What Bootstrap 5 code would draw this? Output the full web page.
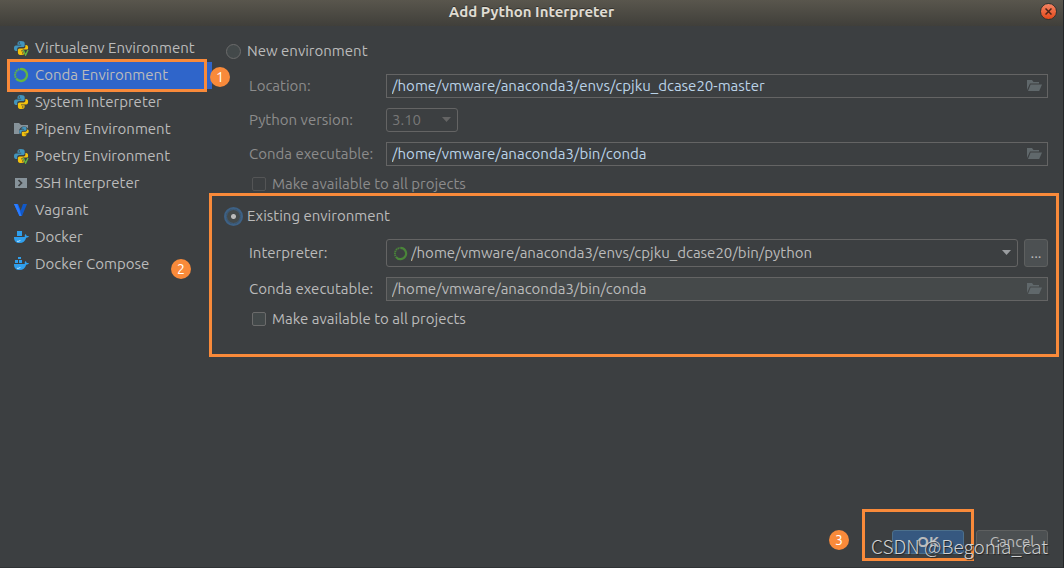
<!DOCTYPE html>
<html lang="en">
<head>
<meta charset="utf-8">
<meta name="viewport" content="width=device-width, initial-scale=1">
<title>Add Python Interpreter</title>
<link href="https://cdn.jsdelivr.net/npm/bootstrap@5.3.0/dist/css/bootstrap.min.css" rel="stylesheet">
<style>
body{background:#3c3f41;color:#bbb;font:15px/20px Ubuntu,"Noto Sans",sans-serif}
.dialog{border-right:1px solid #242628;border-bottom:1px solid #303335}
.titlebar{height:26px;background:linear-gradient(#59564d,#403f3a);color:#dfdbd2;font-weight:700;line-height:24px;text-shadow:0 -1px #33322e}
.close-btn{width:17px;height:17px;right:6px;top:3px;border:1px solid #34332e;border-radius:50%;background:linear-gradient(#f58463,#e4491a);color:#4a2418}
.sidebar{width:212px;padding:9px 0 0 8px}
.kinds a{height:27px;padding-left:5px;gap:6px;line-height:18px;padding-bottom:1px;color:#bbb;text-decoration:none;white-space:nowrap}
.kinds a.active{background:#2f65ca}
.kinds svg{width:16px;height:16px;flex:none}
.options{padding:15px 15px 0 14px}
.option-title{height:20px;gap:6px}
.option-body{padding:13px 0 0 23px}
.field-row{display:grid;grid-template-columns:137px minmax(0,1fr);align-items:center;margin-bottom:10px}
.soft{color:#8c8c8c}
.box{height:24px;border:1px solid #646464;background:#3c3f41}
.box input{border:0;background:transparent;outline:0;padding:0 5px;color:#bbb;min-width:0}
.box.editable input{color:#bbd3e8}
.box.locked{background:#45494a}
.browse{width:27px;border:0;padding:0;background:transparent;color:#60686b}
.browse svg{display:block;margin:auto}
.combo{height:28px;border:1px solid #646464;border-radius:3px;position:relative}
.combo select{appearance:none;display:block;border:0;background:transparent;width:100%;height:100%;color:#bbb;outline:0;padding:0 24px 0 24px}
.combo .ring{position:absolute;left:6px;top:6px}
.combo .arrow{position:absolute;right:5px;top:50%;margin-top:-3px}
.combo.small-combo{width:72px;height:24px}
.small-combo select{padding:0 5px;color:#777;opacity:1}
.interp-row{gap:6px}
.more{width:24px;height:28px;border:1px solid #5e6060;border-radius:3px;background:#4c5052;color:#bbb;padding:0}
.radio{appearance:none;width:15px;height:15px;border:1px solid #6b6b6b;border-radius:50%;background:#43494a;margin:0}
.radio:checked{background:radial-gradient(circle,#bbb 0 2px,#43494a 3px);border-color:#3d6185;outline:2px solid #3d6185}
.tick{appearance:none;width:14px;height:14px;border:1px solid #6b6b6b;border-radius:2px;background:#43494a;margin:0}
.tick:disabled{background:#3c3f41;border-color:#545556}
.tick-row{height:20px;margin-top:-2px;gap:6px;padding-left:3px}
.existing{margin-top:12px}
.footer{padding:0 15px 13px;gap:12px}
.footer button{width:72px;height:24px;padding:0;line-height:22px;border:1px solid #5e6060;border-radius:3px;background:#4c5052;color:#bbb}
.footer .ok{background:#365880;border-color:#4c708c;font-weight:700}
.frame{position:absolute;border:3px solid #f98a3a;pointer-events:none;z-index:2}
.step{position:absolute;width:20px;height:20px;border-radius:50%;background:#f98a3a;color:#fff;font-size:14px;line-height:20px;text-align:center;z-index:3}
.frame-kind{left:-1px;right:5px;top:-3px;bottom:-3px}
.frame-existing{left:-17px;right:-11px;top:-13px;bottom:-28px}
.frame-ok{left:-30px;right:-10px;top:-21px;bottom:-7px}
.step-1{right:-18px;top:5px}
.step-2{right:21px;bottom:-1px}
.step-3{left:-63px;top:0}
.watermark{position:absolute;right:15px;bottom:9px;z-index:4;font:300 19px/24px "Noto Sans CJK SC",sans-serif;color:#d0d1d2;text-shadow:1px 1px 1px #222;white-space:nowrap;pointer-events:none}
</style>
</head>
<body>
<svg class="d-none" aria-hidden="true">
<defs>
<g id="python"><path fill="#4295bd" d="M7.8 1C5.4 1 4.5 2 4.5 3.3v1.5h3.7v.7H3C1.5 5.500 1 6.700 1 8.300S1.700 11 3 11h1.200V9.200c0-1.300 1-2.200 2.300-2.200H10c1 0 1.700-.8 1.700-1.800V3.300C11.700 1.700 10.300 1 7.800 1z"/><circle cx="6.300" cy="3" r=".7" fill="#3c3f41"/><path fill="#f4c20d" d="M8.300 15c2.400 0 3.300-1 3.300-2.300v-1.500H8v-.7h5.100c1.500 0 2-1.200 2-2.800S14.400 5 13.100 5h-.7v1.400c0 1.300-1 2.100-2.300 2.100H6.600c-1 0-1.700.8-1.700 1.800v2.400c0 1.600 1.200 2.300 3.400 2.300z"/><circle cx="9.800" cy="13" r=".7" fill="#3c3f41"/></g>
<g id="python-v"><use href="#python"/><path d="M9.500 9.500H16V16h-4z" fill="#3c3f41"/><path d="m10.300 10 2.300 5L15 10" fill="none" stroke="#62b543" stroke-width="1.400"/></g>
<g id="ring-shape" fill="none" stroke="currentColor"><path d="M8 2a6 6 0 1 1-4.900 9.500" stroke-width="2.300"/><path d="M2.700 10.700A6 6 0 0 1 8 2" stroke-width="2" stroke-dasharray="1.500 .7"/></g>
<g id="folder-open"><path d="M1 12V2h5l1.500 2H13v1.500H4L1 12z"/><path d="M4.600 6.500H16L13.200 13H2z"/></g>
<g id="whale" fill="#2f9fed"><path d="M1 8h10.800c-.3-1.200 0-2.200.7-3 .8.600 1.100 1.200 1.200 2 .8-.1 1.600 0 2.200.3-.5 1-1.400 1.400-2.700 1.400C12.200 12 10 14 6.500 14 3 14 1 12 1 8z"/><path d="M4 12.300c1.500.3 2.700-.2 3.500-1.300" stroke="#bce2fb" fill="none"/></g>
</defs>
</svg>
<div class="dialog position-relative d-flex flex-column min-vh-100">
<header class="titlebar position-relative text-center">Add Python Interpreter
<button class="close-btn position-absolute p-0 d-flex align-items-center justify-content-center" aria-label="Close"><svg width="7" height="7" viewBox="0 0 7 7"><path d="m.5.5 6 6m0-6-6 6" stroke="currentColor" stroke-width="1.500"/></svg></button>
</header>
<main class="d-flex flex-grow-1">
<nav class="sidebar flex-shrink-0" aria-label="Interpreter type">
<div class="kinds position-relative">
<a href="#" class="d-flex align-items-center"><svg viewBox="0 0 16 16"><use href="#python-v"/></svg>Virtualenv Environment</a>
<a href="#" class="active position-relative d-flex align-items-center"><svg viewBox="0 0 16 16" color="#62b543"><use href="#ring-shape"/></svg>Conda Environment<span class="frame frame-kind"></span><span class="step step-1">1</span></a>
<a href="#" class="d-flex align-items-center"><svg viewBox="0 0 16 16"><use href="#python"/></svg>System Interpreter</a>
<a href="#" class="d-flex align-items-center"><svg viewBox="0 0 16 16"><path fill="#87939a" d="M1 2h5l2 2h7v9H1z"/><circle cx="11" cy="10.500" r="5" fill="#3c3f41"/><use href="#python" transform="translate(5.500 5) scale(.68)"/></svg>Pipenv Environment</a>
<a href="#" class="d-flex align-items-center"><svg viewBox="0 0 16 16"><use href="#python-v"/></svg>Poetry Environment</a>
<a href="#" class="d-flex align-items-center"><svg viewBox="0 0 16 16"><path fill="#87939a" d="M2 3h12v10H2z"/><path d="m5.500 5 3 3-3 3" fill="none" stroke="#3c3f41" stroke-width="1.700"/></svg>SSH Interpreter</a>
<a href="#" class="d-flex align-items-center"><svg viewBox="0 0 16 16"><path fill="#1868f2" d="M1 2h4l3 7.500V14H6.500z"/><path fill="#1158c7" d="M14 2h-4L7.500 9v5H9z"/><path fill="#2b7dff" d="M1 2h3l4.500 12h-2z"/></svg>Vagrant</a>
<a href="#" class="d-flex align-items-center"><svg viewBox="0 0 16 16"><use href="#whale"/><path fill="#2f9fed" d="M4 2h5v5H4z"/></svg>Docker</a>
<a href="#" class="d-flex align-items-center"><svg viewBox="0 0 16 16"><use href="#whale"/><path fill="#2f9fed" d="M5 1h3v2H5zM2 4h3v3H2zM6 4h3v3H6z"/></svg>Docker Compose</a>
<span class="step step-2">2</span>
</div>
</nav>
<form class="options flex-grow-1">
<section>
<div class="option-title d-flex align-items-center"><input class="radio" type="radio" name="env" id="new-env"><label for="new-env">New environment</label></div>
<div class="option-body">
<div class="field-row"><label class="soft" for="loc">Location:</label><div class="box editable d-flex"><input class="flex-grow-1" id="loc" value="/home/vmware/anaconda3/envs/cpjku_dcase20-master"><button type="button" class="browse" aria-label="Browse"><svg width="16" height="16" fill="currentColor"><use href="#folder-open"/></svg></button></div></div>
<div class="field-row"><label class="soft" for="ver">Python version:</label><div class="combo small-combo"><select id="ver" disabled><option>3.10</option></select><svg class="arrow" width="11" height="6"><path d="M1 0h9L5.500 5z" fill="#646464"/></svg></div></div>
<div class="field-row"><label class="soft" for="conda1">Conda executable:</label><div class="box editable d-flex"><input class="flex-grow-1" id="conda1" value="/home/vmware/anaconda3/bin/conda"><button type="button" class="browse" aria-label="Browse"><svg width="16" height="16" fill="currentColor"><use href="#folder-open"/></svg></button></div></div>
<div class="tick-row d-flex align-items-center soft"><input class="tick" type="checkbox" id="all1" disabled><label for="all1">Make available to all projects</label></div>
</div>
</section>
<section class="existing position-relative">
<div class="option-title d-flex align-items-center"><input class="radio" type="radio" name="env" id="old-env" checked><label for="old-env">Existing environment</label></div>
<div class="option-body">
<div class="field-row"><label for="interp">Interpreter:</label><div class="d-flex interp-row"><div class="combo flex-grow-1"><svg class="ring" width="15" height="15" viewBox="0 0 16 16" color="#4a8539"><use href="#ring-shape"/></svg><select id="interp"><option>/home/vmware/anaconda3/envs/cpjku_dcase20/bin/python</option></select><svg class="arrow" width="11" height="6"><path d="M1 0h9L5.500 5z" fill="#9a9da0"/></svg></div><button type="button" class="more">...</button></div></div>
<div class="field-row"><label for="conda2">Conda executable:</label><div class="box locked d-flex"><input class="flex-grow-1" id="conda2" readonly value="/home/vmware/anaconda3/bin/conda"><button type="button" class="browse" aria-label="Browse"><svg width="16" height="16" fill="currentColor"><use href="#folder-open"/></svg></button></div></div>
<div class="tick-row d-flex align-items-center"><input class="tick" type="checkbox" id="all2"><label for="all2">Make available to all projects</label></div>
</div>
<span class="frame frame-existing"></span>
</section>
</form>
</main>
<footer class="footer d-flex justify-content-end"><div class="position-relative"><button type="button" class="ok d-block">OK</button><span class="frame frame-ok"></span><span class="step step-3">3</span></div><button type="button">Cancel</button></footer>
<div class="watermark">CSDN @Begonia_cat</div>
</div>
<script src="https://cdn.jsdelivr.net/npm/bootstrap@5.3.0/dist/js/bootstrap.bundle.min.js"></script>
</body>
</html>
